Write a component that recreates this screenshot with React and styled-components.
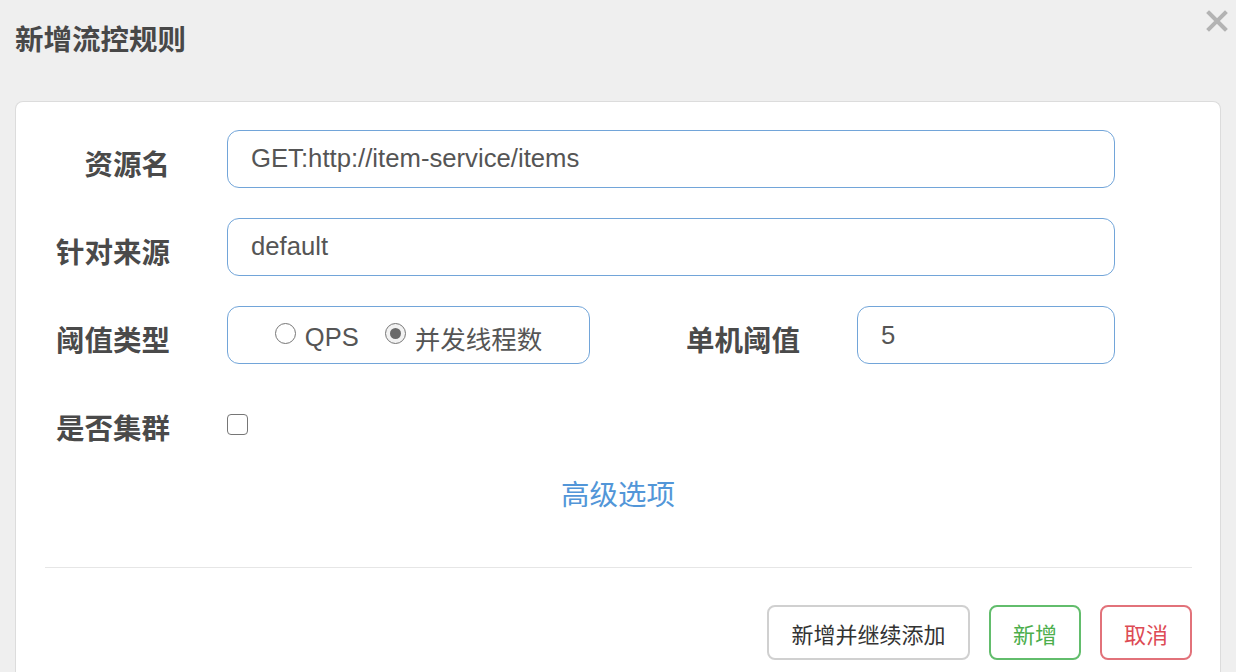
import React from "react";
import styled, { createGlobalStyle } from "styled-components";

const Global = createGlobalStyle`
  html, body { margin: 0; padding: 0; }
  body {
    background: #efefef;
    font-family: "Liberation Sans", "Noto Sans CJK SC", sans-serif;
    width: 1236px;
    height: 672px;
    overflow: hidden;
  }
`;

const Page = styled.div`
  width: 1236px;
  height: 672px;
  display: flex;
  flex-direction: column;
  box-sizing: border-box;
`;

const Header = styled.div`
  height: 101px;
  display: flex;
  justify-content: space-between;
  align-items: flex-start;
  padding: 0 8px 0 15px;
  box-sizing: border-box;
  flex-shrink: 0;
`;

const Title = styled.h4`
  margin: 20px 0 0;
  font-size: 28.5px;
  line-height: 40px;
  font-weight: 700;
  color: #484848;
`;

const Close = styled.button`
  margin-top: 10px;
  width: 22px;
  height: 22px;
  padding: 0;
  border: 0;
  background: none;
  display: flex;
`;

const Panel = styled.div`
  flex: 1;
  margin: 0 15px;
  background: #fff;
  border: 1px solid #dcdcdc;
  border-bottom: 0;
  border-radius: 8px 8px 0 0;
  padding-top: 28px;
  display: flex;
  flex-direction: column;
`;

const Form = styled.div`
  display: flex;
  flex-direction: column;
  gap: 30px;
  padding-right: 105px;
`;

const Row = styled.div`
  display: flex;
  align-items: center;
  height: 58px;
  gap: 57px;
`;

const Label = styled.label`
  width: ${(p) => p.$w || 154}px;
  flex-shrink: 0;
  text-align: right;
  font-size: 28.5px;
  font-weight: 700;
  color: #4a4a4a;
  padding-top: 6px;
  box-sizing: border-box;
  white-space: nowrap;
`;

const Input = styled.div`
  flex: ${(p) => (p.$w ? "none" : 1)};
  width: ${(p) => (p.$w ? `${p.$w}px` : "auto")};
  height: 58px;
  box-sizing: border-box;
  border: 1.5px solid #72a5d9;
  border-radius: 12px;
  padding: 0 23px;
  display: flex;
  align-items: center;
  font-size: 25.7px;
  color: #555;
  padding-bottom: ${(p) => (p.$raise ? 0 : 2)}px;
`;

const RadioGroup = styled(Input)`
  justify-content: center;
  gap: 26px;
  padding-top: 6px;
`;

const RadioItem = styled.span`
  display: inline-flex;
  align-items: center;
  gap: 9px;
  font-size: 25.5px;
  color: #555;
`;

const RadioCircle = styled.span`
  width: 21px;
  height: 21px;
  box-sizing: border-box;
  border-radius: 50%;
  border: 1.5px solid #767676;
  background: ${(p) => (p.$on ? "#f2f2f2" : "#fff")};
  display: inline-flex;
  align-items: center;
  justify-content: center;
  margin-top: -8px;
  &::after {
    content: "";
    width: 11px;
    height: 11px;
    border-radius: 50%;
    background: ${(p) => (p.$on ? "#6a6a6a" : "transparent")};
  }
`;

const Checkbox = styled.span`
  width: 21px;
  height: 21px;
  box-sizing: border-box;
  border: 1.5px solid #767676;
  border-radius: 4px;
  background: #fff;
  margin-top: 2px;
`;

const Advanced = styled.a`
  display: block;
  margin-top: 23px;
  text-align: center;
  font-size: 28.5px;
  line-height: 40px;
  color: #5296d8;
  text-decoration: none;
`;

const Divider = styled.hr`
  margin: 52px 28px 0 29px;
  border: 0;
  border-top: 1.5px solid #e6e6e6;
  height: 0;
`;

const Footer = styled.div`
  display: flex;
  justify-content: flex-end;
  gap: 19px;
  padding: 37px 28px 0 0;
`;

const tones = {
  default: { border: "#d0d0d0", color: "#333" },
  success: { border: "#62bd6c", color: "#4cae4c" },
  danger: { border: "#e2727a", color: "#dd4b55" },
};

const Button = styled.button`
  height: 55px;
  min-width: ${(p) => (p.$tone === "default" ? 203 : 91)}px;
  box-sizing: border-box;
  padding: 0 22px;
  background: #fff;
  border: 2px solid ${(p) => tones[p.$tone].border};
  color: ${(p) => tones[p.$tone].color};
  border-radius: 8px;
  font-family: "Liberation Sans", "Noto Sans CJK SC", sans-serif;
  font-size: 22px;
`;

export default function App() {
  return (
    <>
      <Global />
      <Page>
        <Header>
          <Title>新增流控规则</Title>
          <Close aria-label="close">
            <svg width="22" height="22" viewBox="0 0 22 22">
              <path d="M3 3 L19 19 M19 3 L3 19" stroke="#b3b3b3" strokeWidth="4" strokeLinecap="square" />
            </svg>
          </Close>
        </Header>
        <Panel>
          <Form>
            <Row>
              <Label>资源名</Label>
              <Input>GET:http://item-service/items</Input>
            </Row>
            <Row>
              <Label>针对来源</Label>
              <Input>default</Input>
            </Row>
            <Row>
              <Label>阈值类型</Label>
              <RadioGroup $w={363}>
                <RadioItem>
                  <RadioCircle />
                  QPS
                </RadioItem>
                <RadioItem>
                  <RadioCircle $on />
                  并发线程数
                </RadioItem>
              </RadioGroup>
              <Label $w={153}>单机阈值</Label>
              <Input $raise>5</Input>
            </Row>
            <Row>
              <Label>是否集群</Label>
              <Checkbox />
            </Row>
          </Form>
          <Advanced>高级选项</Advanced>
          <Divider />
          <Footer>
            <Button $tone="default">新增并继续添加</Button>
            <Button $tone="success">新增</Button>
            <Button $tone="danger">取消</Button>
          </Footer>
        </Panel>
      </Page>
    </>
  );
}
